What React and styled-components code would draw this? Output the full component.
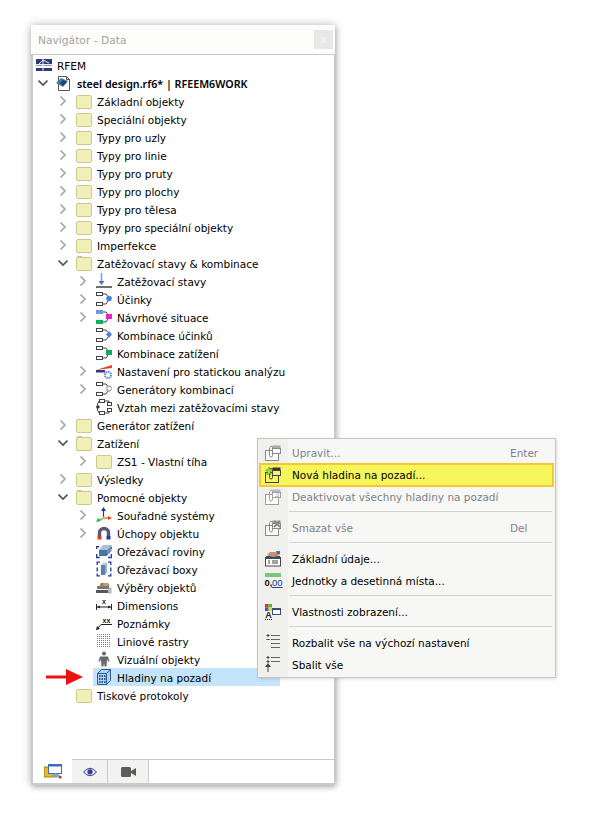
import React from 'react'
import styled, { createGlobalStyle } from 'styled-components'

const GlobalStyle = createGlobalStyle`
  html, body { margin: 0; padding: 0; background: #fff; }
  body { font-family: "DejaVu Sans", "Noto Sans", sans-serif; font-size: 10.5px; color: #000; }
`

const Page = styled.div`
  position: relative;
  width: 600px;
  height: 820px;
  padding: 25px 0 0 31px;
  box-sizing: border-box;
  overflow: hidden;
`
const Panel = styled.div`
  width: 304px;
  height: 760px;
  display: flex;
  flex-direction: column;
  background: #fdfdfb;
  box-shadow: 0 0 9px rgba(0, 0, 0, 0.25), 1px 2px 5px rgba(0, 0, 0, 0.2);
`
const TitleBar = styled.div`
  height: 29px;
  display: flex;
  align-items: center;
  justify-content: space-between;
  padding: 0 2px 0 7px;
  flex: none;
`
const Title = styled.span`
  font-size: 10.7px;
  padding-top: 2px;
  color: #a3a3a3;
`
const CloseButton = styled.div`
  width: 19px;
  height: 19px;
  background: #e8e8e8;
  color: #f8f8f8;
  font-size: 10px;
  display: flex;
  align-items: center;
  justify-content: center;
`
const TreeBox = styled.div`
  flex: 1;
  background: #fff;
  border: solid #c9c9d0;
  border-width: 1px 1px 0 2px;
  padding-top: 1px;
  min-height: 0;
`
const Row = styled.div`
  height: 18px;
  display: flex;
  align-items: center;
  padding-left: ${p => p.$level * 20 + 1}px;
`
const RootRow = styled(Row)`
  padding-left: 3px;
`
const Slot = styled.div`
  width: 19px;
  height: 18px;
  flex: none;
  display: flex;
  align-items: center;
  padding-left: 4px;
  box-sizing: border-box;
`
const Content = styled.div`
  height: 18px;
  display: flex;
  align-items: center;
  gap: 5px;
  padding-left: 3px;
  width: ${p => (p.$selected ? '184px' : 'auto')};
  background: ${p => (p.$selected ? '#c4e4fb' : 'transparent')};
`
const RootContent = styled(Content)`
  padding-left: 0;
`
const Label = styled.span`
  font-size: 10.5px;
  padding-top: 2px;
  white-space: nowrap;
  ${p => p.$bold && 'font-family: "Noto Sans", sans-serif; font-size: 10.7px; font-weight: 600;'}
`
const TabBar = styled.div`
  height: 26px;
  flex: none;
  display: flex;
  box-sizing: border-box;
  background: #fff;
  border-left: 2px solid #c9c9d0;
  border-right: 1px solid #c9c9d0;
  border-bottom: 2px solid #c9c9d0;
`
const Tab = styled.div`
  width: ${p => p.$w}px;
  height: 24px;
  flex: none;
  display: flex;
  align-items: center;
  justify-content: center;
  box-sizing: border-box;
  background: ${p => (p.$active ? '#fff' : '#f2f2f0')};
  border-top: 1px solid ${p => (p.$active ? '#fff' : '#c9c9d0')};
  border-right: ${p => (p.$active ? 'none' : '1px solid #c9c9d0')};
`
const TabRest = styled.div`
  flex: 1;
  border-top: 1px solid #c9c9d0;
`
const Menu = styled.div`
  position: absolute;
  left: 257px;
  top: 438px;
  width: 299px;
  box-sizing: border-box;
  padding: 3px 1px 1px;
  background: linear-gradient(to right, #f0f0ec 0, #f0f0ec 30px, #f7f7f5 30px);
  border: 1px solid #c6c6c6;
  box-shadow: 1px 1px 3px rgba(0, 0, 0, 0.15);
`
const MenuRow = styled.div`
  height: 22px;
  display: flex;
  align-items: center;
  box-sizing: border-box;
  color: ${p => (p.$off ? '#80808a' : '#000')};
  ${p => p.$active && 'height: 24px; margin: -1px 0; background: #f6f65c; border: 2px solid #f2ca30;'}
`
const MenuIcon = styled.div`
  width: 28px;
  margin-left: ${p => (p.$active ? '-2px' : '0')};
  flex: none;
  display: flex;
  justify-content: center;
`
const MenuText = styled.span`
  font-size: 10.5px;
  margin-left: 5px;
  flex: 1;
  white-space: nowrap;
`
const Shortcut = styled.span`
  font-size: 10.5px;
  width: 44px;
  flex: none;
`
const Separator = styled.div`
  height: 1px;
  margin: 3px 2px 5px 30px;
  background: #d2d2d2;
`
const Arrow = styled.svg`
  position: absolute;
  left: 46px;
  top: 669px;
`

const Chevron = ({ open }) => open ? (
  <svg width="10" height="10" viewBox="0 0 10 10"><path d="M.5 2.500L5 7l4.500-4.500" fill="none" stroke="#555" strokeWidth="1.7" /></svg>
) : (
  <svg width="10" height="10" viewBox="0 0 10 10"><path d="M2.500.500L7 5 2.500 9.500" fill="none" stroke="#a8a8a8" strokeWidth="1.7" /></svg>
)

const Folder = ({ open }) => (
  <svg width="16" height="16" viewBox="0 0 16 16">
    {open && <path d="M1 3V2.500q0-1 1-1h4l1 1.500" fill="none" stroke="#c6c68a" />}
    <rect x="0.500" y="2.500" width="15" height="13" rx="1.500" fill="#f1f0b8" stroke="#c9c98e" />
  </svg>
)

const RfemLogo = () => (
  <svg width="16" height="16" viewBox="0 0 16 16">
    <rect x="0" y="2" width="16" height="6.500" fill="#2c3a78" />
    <rect x="0" y="11" width="16" height="3" fill="#2c3a78" />
    <path d="M0 7.500h16M7 2v12M3 7l4-4 6 3" fill="none" stroke="#fff" strokeWidth="0.900" />
  </svg>
)

const DocIcon = () => (
  <svg width="16" height="16" viewBox="0 0 16 16">
    <path d="M2.500 1.500h8l3 3v11h-11z" fill="#fff" stroke="#555" />
    <path d="M10.500 1.500v3h3" fill="none" stroke="#555" />
    <path d="M0 8l5-5 7 3-5 6z" fill="#4a78a8" />
    <path d="M4 8l3-3 4 2-4 4z" fill="#22456c" />
  </svg>
)

const LoadIcon = () => (
  <svg width="16" height="16" viewBox="0 0 16 16">
    <path d="M5.500 0v10" stroke="#7ea4d8" strokeWidth="1.600" />
    <path d="M2.500 8l3 4 3-4z" fill="#4a78c0" />
    <path d="M0 14h16" stroke="#333" strokeWidth="1.400" />
  </svg>
)

// two small boxes with arrows running to a coloured marker
const FlowIcon = ({ top = '#fff', bottom = '#fff', mark, shape = 'rect' }) => (
  <svg width="16" height="16" viewBox="0 0 16 16">
    <rect x="0.500" y="1.500" width="6" height="3" fill={top} stroke={top === '#fff' ? '#444' : top} />
    <rect x="0.500" y="11.500" width="6" height="3" fill={bottom} stroke={bottom === '#fff' ? '#444' : bottom} />
    <path d="M7 3h3l1.500 2M7 13h3l2-3" fill="none" stroke="#444" />
    {shape === 'circle' && <circle cx="13" cy="7.500" r="2.800" fill={mark} />}
    {shape === 'diamond' && <path d="M13 4l3 3.500-3 3.500-3-3.500z" fill={mark} />}
    {shape === 'rect' && <rect x="10" y="5" width="6" height="5" fill={mark} />}
    {shape === 'outline' && <path d="M11 5h3l2 2.500-2 2.500h-3z" fill="#fff" stroke="#888" />}
  </svg>
)

const StaticIcon = () => (
  <svg width="16" height="16" viewBox="0 0 16 16">
    <path d="M0 7l16-5v3z" fill="#e8401c" />
    <path d="M0 7h9v2.500H0z" fill="#2c3a88" />
    <circle cx="12" cy="12" r="3" fill="none" stroke="#6a8ee0" strokeWidth="2" strokeDasharray="1.500 0.800" />
    <circle cx="12" cy="12" r="3.800" fill="none" stroke="#6a8ee0" strokeWidth="0.800" strokeDasharray="1.200 1.200" />
  </svg>
)

const RelationIcon = () => (
  <svg width="16" height="16" viewBox="0 0 16 16">
    <rect x="3.500" y="0.500" width="5" height="3" fill="#fff" stroke="#444" />
    <rect x="3.500" y="12.500" width="5" height="3" fill="#fff" stroke="#444" />
    <rect x="11.500" y="3.500" width="4" height="3" fill="#fff" stroke="#444" />
    <rect x="11.500" y="9.500" width="4" height="3" fill="#fff" stroke="#444" />
    <path d="M9 2h4v1M13 13v1H9M3 2Q1 5 1 8t2 6" fill="none" stroke="#444" />
    <path d="M0 8l2-2v4zM4 8l-2-2v4z" fill="#333" />
  </svg>
)

const AxesIcon = () => (
  <svg width="16" height="16" viewBox="0 0 16 16">
    <path d="M7.500 10V2" stroke="#1c3c90" strokeWidth="1.200" />
    <path d="M7.500 0l2.500 4h-5z" fill="#1c3c90" />
    <path d="M7.500 11H13" stroke="#e84020" strokeWidth="1.200" />
    <path d="M16 11l-4-2v4z" fill="#e84020" />
    <path d="M7.500 11L3 13.500" stroke="#30b050" strokeWidth="1.200" />
    <path d="M0 15l2-4 3 3z" fill="#30b050" />
    <circle cx="8" cy="11" r="1.500" fill="#f0c020" />
  </svg>
)

const MagnetIcon = () => (
  <svg width="16" height="16" viewBox="0 0 16 16">
    <path d="M3.500 11V8a4.500 4.500 0 0 1 9 0v3" fill="none" stroke="#5a5a78" strokeWidth="3.400" />
    <rect x="1.500" y="11" width="4" height="3.500" fill="#e83020" />
    <rect x="10.500" y="11" width="4" height="3.500" fill="#1c3cb0" />
  </svg>
)

const ClipPlaneIcon = () => (
  <svg width="16" height="16" viewBox="0 0 16 16">
    <path d="M.700 6V3.700h2.500M.700 11v3.500h3M12 14.500h3.300V11M15.300 6V4" fill="none" stroke="#1c3c90" strokeWidth="1.300" />
    <path d="M3 7l4-5h8.500L11 7z" fill="#a8c0d8" />
    <rect x="3" y="7" width="8" height="6" fill="#4c74a0" />
    <path d="M11 7l4.500-5v6L11 13z" fill="#6c90b4" />
  </svg>
)

const ClipBoxIcon = () => (
  <svg width="16" height="16" viewBox="0 0 16 16">
    <path d="M4 1.200H1.200V4M1.200 6.500v4M1.200 12.500v2.300H4M12 1.200h2.800V4M14.800 6.500v4M14.800 12.500v2.300H12" fill="none" stroke="#1c3c90" strokeWidth="1.300" />
    <path d="M5 4l2-2.500h4L9 4z" fill="#c0d0e0" />
    <rect x="5" y="4" width="4" height="10" fill="#5c80a8" />
    <path d="M9 4l2-2.500v10L9 14z" fill="#9ab0c8" />
  </svg>
)

const SelectionIcon = () => (
  <svg width="16" height="16" viewBox="0 0 16 16">
    <rect x="0" y="11" width="13" height="3" fill="#555" />
    <rect x="1" y="7" width="12" height="3" fill="#777" />
    <path d="M3 7l2-3h7l2 3z" fill="#a8a070" />
    <circle cx="6" cy="5" r="1" fill="#e03020" />
    <circle cx="10" cy="5" r="1" fill="#e8b020" />
    <rect x="12" y="9" width="3" height="5" fill="#c8c8c8" stroke="#777" strokeWidth="0.500" />
  </svg>
)

const DimensionIcon = () => (
  <svg width="16" height="16" viewBox="0 0 16 16">
    <path d="M0.500 7v6M15.500 7v6M1 10h14" fill="none" stroke="#222" />
    <path d="M1 10l3-1.500v3zM15 10l-3-1.500v3z" fill="#222" />
    <text x="8" y="7" fontSize="7" fontWeight="700" textAnchor="middle" fontFamily="Liberation Sans" fill="#222">x</text>
  </svg>
)

const NoteIcon = () => (
  <svg width="16" height="16" viewBox="0 0 16 16">
    <path d="M5 9.500h11M5 9.500L0.500 14.500" fill="none" stroke="#222" />
    <path d="M0 15l1-4 3 3z" fill="#222" />
    <text x="10.500" y="8" fontSize="7" fontWeight="700" textAnchor="middle" fontFamily="Liberation Sans" fill="#222">xx</text>
  </svg>
)

const GridIcon = () => (
  <svg width="16" height="16" viewBox="0 0 16 16">
    <path d="M1 1.500h14M1 3.500h14M1 5.500h14M1 7.500h14M1 9.500h14M1 11.500h14M1 13.500h14" stroke="#808080" strokeDasharray="1 1" />
  </svg>
)

const PersonIcon = () => (
  <svg width="16" height="16" viewBox="0 0 16 16">
    <circle cx="8" cy="2.500" r="2" fill="#666" />
    <path d="M4 5.500h8l1.500 5h-1.500l-1-2.500-.5 7.500H8.500L8 11l-.5 4.500H5.500L5 8 4 10.500H2.500z" fill="#666" />
  </svg>
)

const BuildingIcon = () => (
  <svg width="16" height="16" viewBox="0 0 16 16">
    <path d="M1.500 4.500L5.500.500h9v11l-4 4h-9z" fill="#b4d2ec" stroke="#2c5c90" />
    <path d="M1.500 4.500h9v11M10.500 4.500l4-4" fill="none" stroke="#2c5c90" />
    <path d="M3 6h1.500v2H3zM5.500 6H7v2H5.500zM8 6h1.500v2H8zM3 9h1.500v2H3zM5.500 9H7v2H5.500zM8 9h1.500v2H8zM3 12h1.500v2H3zM5.500 12H7v2H5.500zM8 12h1.500v2H8z" fill="#2c5c90" />
  </svg>
)

const ClipDocIcon = ({ tone = '#666', star, mark }) => (
  <svg width="16" height="16" viewBox="0 0 16 16" style={{ overflow: 'visible' }}>
    <rect x="0.500" y="5.500" width="13" height="10" fill={star ? '#f6f65c' : '#fbfbfb'} stroke={tone} />
    <rect x="7.500" y="0.500" width="8" height="3" fill={star ? '#333' : tone} opacity={star ? 1 : 0.7} />
    <rect x="7.500" y="3.500" width="8" height="5" fill={star ? '#f6f65c' : '#fff'} stroke={tone} />
    <path d="M4.500 3v7.500a1.500 1.500 0 0 0 3 0V2.500a1.200 1.200 0 0 0-2.500 0" fill="none" stroke={tone} />
    {star && <path d="M4 0l1 2.500 2.500.5-2 2 .5 3-2-1.500-2 1.500.5-3-2-2 2.500-.5z" fill="#9ae03c" stroke="#4a7020" strokeWidth="0.500" />}
    {mark === 'cross' && <path d="M9 1l6 6M15 1l-6 6" stroke="#888" strokeWidth="2" />}
    {mark === 'three' && <text x="12" y="8" fontSize="8" textAnchor="middle" fontFamily="Liberation Sans" fill={tone}>3</text>}
  </svg>
)

const BaseDataIcon = () => (
  <svg width="16" height="16" viewBox="0 0 16 16" style={{ overflow: 'visible' }}>
    <rect x="0.500" y="6.500" width="15" height="8.500" fill="#fff" stroke="#444" />
    <rect x="1" y="5" width="14" height="3" fill="#3c4c68" />
    <path d="M3 10h2M7 10h6M3 12h2M7 12h6" stroke="#444" />
    <path d="M2 4l3-3h5l3 1 2 2-6 2-5-1z" fill="#c8946c" />
    <path d="M11 0h4v3h-3z" fill="#3c6cc0" />
  </svg>
)

const UnitsIcon = () => (
  <svg width="16" height="16" viewBox="0 0 16 16" style={{ overflow: 'visible' }}>
    <rect x="0" y="0" width="16" height="4" fill="#78c878" />
    <text x="-0.500" y="13" fontSize="9.500" fontWeight="700" fontFamily="Liberation Sans" fill="#111">0,</text>
    <text x="7" y="13" fontSize="9.500" textDecoration="underline" fontFamily="Liberation Sans" fill="#1c3c90">00</text>
  </svg>
)

const DisplayIcon = () => (
  <svg width="16" height="16" viewBox="0 0 16 16" style={{ overflow: 'visible' }}>
    <rect x="0" y="0" width="3.500" height="3.500" fill="#e03030" />
    <rect x="3.500" y="0" width="3.500" height="3.500" fill="#40c040" />
    <rect x="0" y="3.500" width="3.500" height="3.500" fill="#3050e0" />
    <rect x="3.500" y="3.500" width="3.500" height="3.500" fill="#f0d020" />
    <rect x="7.500" y="4.500" width="8" height="6" fill="#fff" stroke="#3c4c78" />
    <path d="M7.500 5h8" stroke="#3c4c78" strokeWidth="2" />
    <text x="3.500" y="14" fontSize="9" fontWeight="700" textAnchor="middle" fontFamily="Liberation Sans" fill="#222">A</text>
    <path d="M0 15.500h7" stroke="#222" strokeDasharray="1 1" />
  </svg>
)

const ExpandIcon = () => (
  <svg width="16" height="16" viewBox="0 0 16 16" style={{ overflow: 'visible' }}>
    <path d="M6 .500h9M6 4.500h9M6 8.500h9M6 12.500h9" stroke="#666" />
    <path d="M3-1v3M1.500.500h3M1.500 4.500h3" stroke="#444" />
  </svg>
)

const CollapseIcon = () => (
  <svg width="16" height="16" viewBox="0 0 16 16" style={{ overflow: 'visible' }}>
    <path d="M6 .500h9M6 4.500h9" stroke="#666" />
    <path d="M3-1v3M1.500.500h3M3 3v3M1.500 4.500h3M3 10v5" stroke="#444" />
    <path d="M3 6l3 4H0z" fill="#444" />
  </svg>
)

const NavTabIcon = () => (
  <svg width="18" height="17" viewBox="0 0 18 17">
    <path d="M0 4h7v3h6v7H0z" fill="#e8b828" stroke="#8a6a18" strokeWidth="0.800" />
    <rect x="4.500" y="1.500" width="13" height="9" fill="#fff" stroke="#3c6cb8" />
    <path d="M4.500 2.500h13" stroke="#3c6cb8" strokeWidth="2" />
    <path d="M6 14l5-4 5 2-1 3-5-2z" fill="#7aa8d8" />
    <rect x="15" y="13" width="2.500" height="2.500" fill="#e03020" />
  </svg>
)

const EyeIcon = () => (
  <svg width="14" height="10" viewBox="0 0 14 10">
    <path d="M0.500 5Q7-2.500 13.500 5 7 12.500.5 5z" fill="#e8e8f4" stroke="#3c3c98" />
    <circle cx="7" cy="4.800" r="2.600" fill="#3c3c98" />
  </svg>
)

const CameraIcon = () => (
  <svg width="15" height="10" viewBox="0 0 15 10">
    <rect x="0" y="0" width="10" height="10" rx="1.500" fill="#5c5c5c" />
    <path d="M10 4l5-3v8l-5-3z" fill="#5c5c5c" />
  </svg>
)

const tree = [
  { level: 0, open: true, icon: <DocIcon />, text: 'steel design.rf6* | RFEEM6WORK', bold: true },
  ...['Základní objekty', 'Speciální objekty', 'Typy pro uzly', 'Typy pro linie', 'Typy pro pruty', 'Typy pro plochy', 'Typy pro tělesa', 'Typy pro speciální objekty', 'Imperfekce']
    .map(text => ({ level: 1, closed: true, icon: <Folder />, text })),
  { level: 1, open: true, icon: <Folder open />, text: 'Zatěžovací stavy & kombinace' },
  { level: 2, closed: true, icon: <LoadIcon />, text: 'Zatěžovací stavy' },
  { level: 2, closed: true, icon: <FlowIcon mark="#4a80e0" shape="circle" />, text: 'Účinky' },
  { level: 2, closed: true, icon: <FlowIcon top="#6a9ae0" bottom="#10b060" mark="#f020c0" />, text: 'Návrhové situace' },
  { level: 2, icon: <FlowIcon mark="#4a80e0" shape="diamond" />, text: 'Kombinace účinků' },
  { level: 2, icon: <FlowIcon mark="#10a860" />, text: 'Kombinace zatížení' },
  { level: 2, closed: true, icon: <StaticIcon />, text: 'Nastavení pro statickou analýzu' },
  { level: 2, closed: true, icon: <FlowIcon shape="outline" />, text: 'Generátory kombinací' },
  { level: 2, icon: <RelationIcon />, text: 'Vztah mezi zatěžovacími stavy' },
  { level: 1, closed: true, icon: <Folder />, text: 'Generátor zatížení' },
  { level: 1, open: true, icon: <Folder open />, text: 'Zatížení' },
  { level: 2, closed: true, icon: <Folder />, text: 'ZS1 - Vlastní tíha' },
  { level: 1, closed: true, icon: <Folder />, text: 'Výsledky' },
  { level: 1, open: true, icon: <Folder open />, text: 'Pomocné objekty' },
  { level: 2, closed: true, icon: <AxesIcon />, text: 'Souřadné systémy' },
  { level: 2, closed: true, icon: <MagnetIcon />, text: 'Úchopy objektu' },
  { level: 2, icon: <ClipPlaneIcon />, text: 'Ořezávací roviny' },
  { level: 2, icon: <ClipBoxIcon />, text: 'Ořezávací boxy' },
  { level: 2, icon: <SelectionIcon />, text: 'Výběry objektů' },
  { level: 2, icon: <DimensionIcon />, text: 'Dimensions' },
  { level: 2, icon: <NoteIcon />, text: 'Poznámky' },
  { level: 2, icon: <GridIcon />, text: 'Liniové rastry' },
  { level: 2, icon: <PersonIcon />, text: 'Vizuální objekty' },
  { level: 2, icon: <BuildingIcon />, text: 'Hladiny na pozadí', selected: true },
  { level: 1, icon: <Folder />, text: 'Tiskové protokoly' },
]

const menu = [
  { icon: <ClipDocIcon tone="#8a8a8a" />, text: 'Upravit...', key: 'Enter', off: true },
  { icon: <ClipDocIcon tone="#444" star />, text: 'Nová hladina na pozadí...', active: true },
  { icon: <ClipDocIcon tone="#a0a0a0" mark="three" />, text: 'Deaktivovat všechny hladiny na pozadí', off: true, sep: true },
  { icon: <ClipDocIcon tone="#8a8a8a" mark="cross" />, text: 'Smazat vše', key: 'Del', off: true, sep: true },
  { icon: <BaseDataIcon />, text: 'Základní údaje...' },
  { icon: <UnitsIcon />, text: 'Jednotky a desetinná místa...', sep: true },
  { icon: <DisplayIcon />, text: 'Vlastnosti zobrazení...', sep: true },
  { icon: <ExpandIcon />, text: 'Rozbalit vše na výchozí nastavení' },
  { icon: <CollapseIcon />, text: 'Sbalit vše' },
]

export default function App() {
  return (
    <Page>
      <GlobalStyle />
      <Panel>
        <TitleBar>
          <Title>Navigátor - Data</Title>
          <CloseButton>x</CloseButton>
        </TitleBar>
        <TreeBox>
          <RootRow $level={0}>
            <RootContent>
              <RfemLogo />
              <Label>RFEM</Label>
            </RootContent>
          </RootRow>
          {tree.map(item => (
            <Row key={item.text} $level={item.level}>
              <Slot>
                {item.open && <Chevron open />}
                {item.closed && <Chevron />}
              </Slot>
              <Content $selected={item.selected}>
                {item.icon}
                <Label $bold={item.bold}>{item.text}</Label>
              </Content>
            </Row>
          ))}
        </TreeBox>
        <TabBar>
          <Tab $w={39} $active><NavTabIcon /></Tab>
          <Tab $w={36}><EyeIcon /></Tab>
          <Tab $w={41}><CameraIcon /></Tab>
          <TabRest />
        </TabBar>
      </Panel>
      <Arrow width="37" height="16" viewBox="0 0 37 16">
        <path d="M0 6.500h20V0l17 8-17 8V9.500H0z" fill="#f01010" />
      </Arrow>
      <Menu>
        {menu.map(item => (
          <React.Fragment key={item.text}>
            <MenuRow $off={item.off} $active={item.active}>
              <MenuIcon $active={item.active}>{item.icon}</MenuIcon>
              <MenuText>{item.text}</MenuText>
              {item.key && <Shortcut>{item.key}</Shortcut>}
            </MenuRow>
            {item.sep && <Separator />}
          </React.Fragment>
        ))}
      </Menu>
    </Page>
  )
}
